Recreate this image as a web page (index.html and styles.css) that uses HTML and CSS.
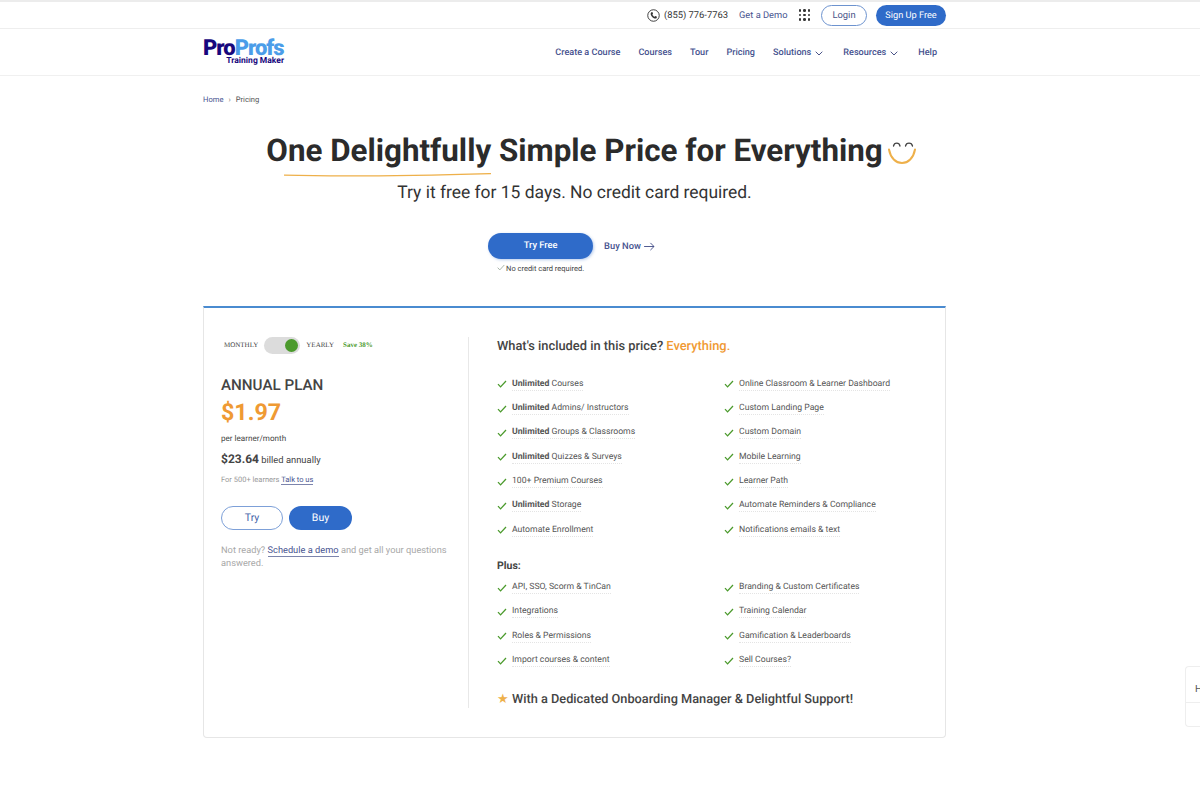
FILE: index.html
```html
<!DOCTYPE html>
<html lang="en">
<head>
<meta charset="utf-8">
<title>ProProfs Training Maker Pricing</title>
<link rel="stylesheet" href="styles.css">
</head>
<body>
<svg class="sprite" width="0" height="0" aria-hidden="true">
  <symbol id="chk" viewBox="0 0 12 10"><path d="M1 5.200 4.200 8.600 11 1.200" fill="none" stroke="#4b9a2c" stroke-width="1.600"/></symbol>
</svg>
<header class="topbar">
  <div class="wrap topbar-in">
    <svg class="phone" viewBox="0 0 14 14" width="13" height="13"><circle cx="7" cy="7" r="6.200" fill="none" stroke="#333" stroke-width="1"/><path d="M4.600 3.600 5.800 3.300 6.500 5 5.800 5.800C6.100 6.800 7.100 7.900 8.200 8.300L9 7.500 10.700 8.300 10.400 9.600C9.800 10.400 8.600 10.500 7.400 9.900 5.600 9 4.400 7.500 4 6 3.800 5 4 4.200 4.600 3.600Z" fill="#333"/></svg>
    <span class="tel">(855) 776-7763</span>
    <a class="demo">Get a Demo</a>
    <span class="dots"><i></i><i></i><i></i><i></i><i></i><i></i><i></i><i></i><i></i></span>
    <a class="login">Login</a>
    <a class="signup">Sign Up Free</a>
  </div>
</header>
<nav class="navbar">
  <div class="wrap nav-in">
    <a class="logo"><span class="logo-main"><b>Pro</b><em>Profs</em></span><span class="logo-sub">Training Maker</span></a>
    <ul class="menu">
      <li>Create a Course</li>
      <li>Courses</li>
      <li>Tour</li>
      <li>Pricing</li>
      <li class="has-caret">Solutions<svg class="caret" viewBox="0 0 8 5" width="8" height="5"><path d="M.7.7 4 4 7.300.7" fill="none" stroke="#4a5488"/></svg></li>
      <li class="has-caret">Resources<svg class="caret" viewBox="0 0 8 5" width="8" height="5"><path d="M.7.7 4 4 7.300.7" fill="none" stroke="#4a5488"/></svg></li>
      <li>Help</li>
    </ul>
  </div>
</nav>
<main class="wrap">
  <div class="crumbs"><a>Home</a><span class="sep">›</span><span>Pricing</span></div>
  <section class="hero">
    <h1><span class="ul">One Delightfully<svg class="swash" viewBox="0 0 207 4" width="207" height="4" preserveAspectRatio="none"><path d="M0 2.200C70 4 140 2.500 207 .6" fill="none" stroke="#eeb04a" stroke-width="1.300"/></svg></span> Simple Price for Everything<svg class="smile" viewBox="0 0 28 26" width="28" height="26"><path d="M1 9.500C2.500 18 8 23 14 23 20 23 25.500 18 27 9.500" fill="none" stroke="#eeb04a" stroke-width="2" stroke-linecap="round"/><path d="M5.500 6C6.300 2.200 11.200 2.200 12 6M17.500 6C18.300 2.200 23.700 2.200 24.500 6" fill="none" stroke="#444" stroke-width="1.300" stroke-linecap="round"/></svg></h1>
    <p class="sub">Try it free for 15 days. No credit card required.</p>
    <div class="cta">
      <div class="cta-try">
        <a class="btn-try">Try Free</a>
        <p class="nocard"><svg viewBox="0 0 12 10" width="8" height="7"><path d="M1 5.200 4.200 8.600 11 1.200" fill="none" stroke="#9aa89a" stroke-width="1.300"/></svg>No credit card required.</p>
      </div>
      <a class="buy-now">Buy Now<svg viewBox="0 0 12 10" width="11" height="9"><path d="M0 5H11M7 1 11 5 7 9" fill="none" stroke="#3f4a86"/></svg></a>
    </div>
  </section>
  <section class="card">
    <aside class="plan">
      <div class="toggle-row">
        <span>MONTHLY</span>
        <span class="toggle"><i></i></span>
        <span>YEARLY</span>
        <b>Save 38%</b>
      </div>
      <h2>ANNUAL PLAN</h2>
      <div class="price">$1.97</div>
      <p class="per">per learner/month</p>
      <p class="billed"><b>$23.64</b> billed annually</p>
      <p class="big">For 500+ learners <a>Talk to us</a></p>
      <div class="plan-btns"><a class="p-try">Try</a><a class="p-buy">Buy</a></div>
      <p class="ready">Not ready? <a>Schedule a demo</a> and get all your questions answered.</p>
    </aside>
    <div class="incl">
      <h3>What's included in this price? <span>Everything.</span></h3>
      <ul class="feats">
        <li><svg><use href="#chk"/></svg><span><b>Unlimited</b> Courses</span></li>
        <li><svg><use href="#chk"/></svg><span>Online Classroom &amp; Learner Dashboard</span></li>
        <li><svg><use href="#chk"/></svg><span><b>Unlimited</b> Admins/ Instructors</span></li>
        <li><svg><use href="#chk"/></svg><span>Custom Landing Page</span></li>
        <li><svg><use href="#chk"/></svg><span><b>Unlimited</b> Groups &amp; Classrooms</span></li>
        <li><svg><use href="#chk"/></svg><span>Custom Domain</span></li>
        <li><svg><use href="#chk"/></svg><span><b>Unlimited</b> Quizzes &amp; Surveys</span></li>
        <li><svg><use href="#chk"/></svg><span>Mobile Learning</span></li>
        <li><svg><use href="#chk"/></svg><span>100+ Premium Courses</span></li>
        <li><svg><use href="#chk"/></svg><span>Learner Path</span></li>
        <li><svg><use href="#chk"/></svg><span><b>Unlimited</b> Storage</span></li>
        <li><svg><use href="#chk"/></svg><span>Automate Reminders &amp; Compliance</span></li>
        <li><svg><use href="#chk"/></svg><span>Automate Enrollment</span></li>
        <li><svg><use href="#chk"/></svg><span>Notifications emails &amp; text</span></li>
      </ul>
      <h4>Plus:</h4>
      <ul class="feats">
        <li><svg><use href="#chk"/></svg><span>API, SSO, Scorm &amp; TinCan</span></li>
        <li><svg><use href="#chk"/></svg><span>Branding &amp; Custom Certificates</span></li>
        <li><svg><use href="#chk"/></svg><span>Integrations</span></li>
        <li><svg><use href="#chk"/></svg><span>Training Calendar</span></li>
        <li><svg><use href="#chk"/></svg><span>Roles &amp; Permissions</span></li>
        <li><svg><use href="#chk"/></svg><span>Gamification &amp; Leaderboards</span></li>
        <li><svg><use href="#chk"/></svg><span>Import courses &amp; content</span></li>
        <li><svg><use href="#chk"/></svg><span>Sell Courses?</span></li>
      </ul>
      <p class="onboard"><span class="star">★</span>With a Dedicated Onboarding Manager &amp; Delightful Support!</p>
    </div>
  </section>
</main>
<div class="help-tab"><span>H</span></div>
</body>
</html>
```
FILE: styles.css
```css
* { box-sizing: border-box; }
html, body { margin: 0; padding: 0; }
body { height: 792px; overflow: hidden; background: #fff; color: #444; font-family: Roboto, "Liberation Sans", sans-serif; text-rendering: geometricPrecision; border-top: 2px solid #ececec; position: relative; }
a { color: inherit; text-decoration: none; }
ul { list-style: none; margin: 0; padding: 0; }
p, h1, h2, h3, h4 { margin: 0; }
.sprite { position: absolute; }
.wrap { width: 743px; margin-left: 203px; }

.topbar { height: 27px; border-bottom: 1px solid #eeeeee; }
.topbar-in { height: 26px; display: flex; align-items: center; justify-content: flex-end; font-size: 9.400px; }
.phone { margin-right: 4px; }
.tel { font-size: 9.400px; color: #333; margin-right: 11px; }
.demo { color: #47538f; font-size: 9.300px; margin-right: 11px; }
.dots { display: grid; grid-template-columns: repeat(3, 2.500px); gap: 2px; margin-right: 11px; }
.dots i { width: 2.500px; height: 2.500px; background: #333; border-radius: 50%; }
.login { width: 46px; height: 21px; line-height: 19px; border: 1px solid #6d93cf; border-radius: 11px; text-align: center; color: #4a5488; margin-right: 9px; }
.signup { width: 70px; height: 21px; line-height: 21px; background: #2f6bc9; border-radius: 11px; text-align: center; color: #fff; font-size: 9.200px; }

.navbar { height: 47px; border-bottom: 1px solid #f0f0f0; }
.nav-in { height: 46px; display: flex; align-items: center; justify-content: space-between; }
.logo { display: flex; flex-direction: column; width: 81px; margin-top: 2px; }
.logo-main { font-size: 22px; line-height: 17px; font-weight: 900; letter-spacing: -1px; white-space: nowrap; }
.logo-main b { color: #17077d; font-weight: 900; }
.logo-main em { color: #4b9de9; font-style: normal; }
.logo-sub { font-size: 8.500px; line-height: 10px; font-weight: 700; color: #17077d; text-align: right; white-space: nowrap; margin-top: -1px; }
.menu { display: flex; align-items: center; gap: 18px; font-size: 9.100px; font-weight: 500; color: #47538f; margin: 2px 9px 0 0; }
.menu li { display: flex; align-items: center; white-space: nowrap; }
.has-caret { padding-right: 2px; }
.caret { margin-left: 4px; }

.crumbs { display: flex; align-items: center; height: 12px; margin-top: 17px; font-size: 7.600px; color: #555; }
.crumbs a { color: #47538f; }
.sep { margin: 0 5px; color: #777; }

.hero { text-align: center; }
.hero h1 { position: relative; width: max-content; margin: 25px auto 0; font-size: 31.330px; line-height: 42px; font-weight: 700; color: #2b2b2b; white-space: nowrap; }
.ul { position: relative; }
.swash { position: absolute; left: 18px; top: 41px; }
.smile { position: absolute; left: 622px; top: 10px; }
.sub { font-size: 17.450px; line-height: 22px; color: #333; margin-top: 10px; }
.cta { display: flex; justify-content: center; align-items: flex-start; gap: 11px; margin-top: 29px; padding-right: 6px; }
.cta-try { display: flex; flex-direction: column; align-items: center; width: 105px; }
.btn-try { display: block; width: 105px; height: 26px; line-height: 26px; border-radius: 13px; background: #2f6bc9; color: #fff; font-size: 9.330px; font-weight: 500; box-shadow: 1px 1px 3px rgba(47, 107, 201, .35); }
.nocard { font-size: 7.500px; color: #444; margin-top: 5px; white-space: nowrap; }
.nocard svg { margin-right: 1px; }
.buy-now { display: flex; align-items: center; gap: 3px; height: 26px; color: #47538f; font-size: 9.330px; font-weight: 500; }

.card { display: flex; margin-top: 33px; height: 432px; border: 1px solid #e6e6e6; border-top: 2px solid #4a8bd0; border-radius: 0 0 4px 4px; padding: 29px 0; }
.plan { width: 265px; border-right: 1px solid #e8e8e8; padding: 0 17px; flex: none; }
.toggle-row { display: flex; align-items: center; font-family: "Liberation Serif", serif; font-size: 7px; color: #444; height: 17px; margin: -1px 0 0 3px; }
.toggle { width: 36px; height: 17px; border-radius: 9px; background: #dcdcdc; margin: 2px 6px 0; position: relative; display: block; }
.toggle i { position: absolute; right: 2px; top: 2px; width: 13px; height: 13px; border-radius: 50%; background: #4b9a2c; }
.toggle-row b { color: #4b9a2c; margin-left: 9px; }
.plan h2 { font-size: 15.200px; line-height: 18px; font-weight: 500; color: #444; margin-top: 23px; }
.price { font-size: 23.300px; line-height: 28px; font-weight: 700; color: #ef9a33; margin-top: 4px; }
.per { font-size: 8.100px; line-height: 12px; color: #444; margin-top: 6px; }
.billed { font-size: 9.400px; line-height: 14px; margin-top: 8px; color: #444; }
.billed b { font-size: 12px; font-weight: 700; }
.big { font-size: 7.500px; line-height: 12px; color: #999; margin-top: 6px; }
.big a, .ready a { color: #47538f; border-bottom: 1px solid #7c84ac; }
.plan-btns { display: flex; gap: 6px; margin-top: 20px; }
.p-try, .p-buy { display: block; height: 24px; line-height: 24px; text-align: center; border-radius: 12px; font-size: 10.500px; }
.p-try { width: 62px; line-height: 22px; border: 1px solid #7da0d8; color: #3f5fa8; }
.p-buy { width: 63px; background: #2f6bc9; color: #fff; }
.ready { font-size: 9.280px; line-height: 13px; color: #a8a8a8; margin-top: 14px; width: 240px; }

.incl { flex: 1; padding: 0 18px 0 28px; }
.incl h3 { font-size: 12.850px; line-height: 16px; font-weight: 500; color: #444; margin-top: 2px; }
.incl h3 span { color: #f09a33; }
.feats { display: grid; grid-template-columns: 227px 1fr; grid-auto-rows: 24.350px; margin-top: 17px; }
.feats li { display: flex; align-items: center; font-size: 8.670px; color: #555; white-space: nowrap; }
.feats svg { width: 10px; height: 8px; margin-right: 5px; flex: none; }
.feats span { border-bottom: 1px dotted #e4e4e4; line-height: 12px; }
.feats b { font-weight: 700; }
.incl h4 { font-size: 10.500px; line-height: 13px; font-weight: 700; color: #444; margin-top: 17px; }
.incl h4 + .feats { margin-top: 3px; }
.onboard { display: flex; align-items: center; font-size: 12.750px; line-height: 16px; font-weight: 500; color: #444; margin-top: 19px; }
.star { color: #eeb04a; font-size: 13px; width: 15px; }

.help-tab { position: absolute; right: 0; top: 664px; width: 15px; height: 61px; background: #fff; border: 1px solid #eeeeee; border-right: 0; border-radius: 4px 0 0 4px; overflow: hidden; font-size: 10px; color: #555; }
.help-tab span { display: block; height: 36px; line-height: 46px; padding-left: 9px; border-bottom: 1px solid #eeeeee; }
```
